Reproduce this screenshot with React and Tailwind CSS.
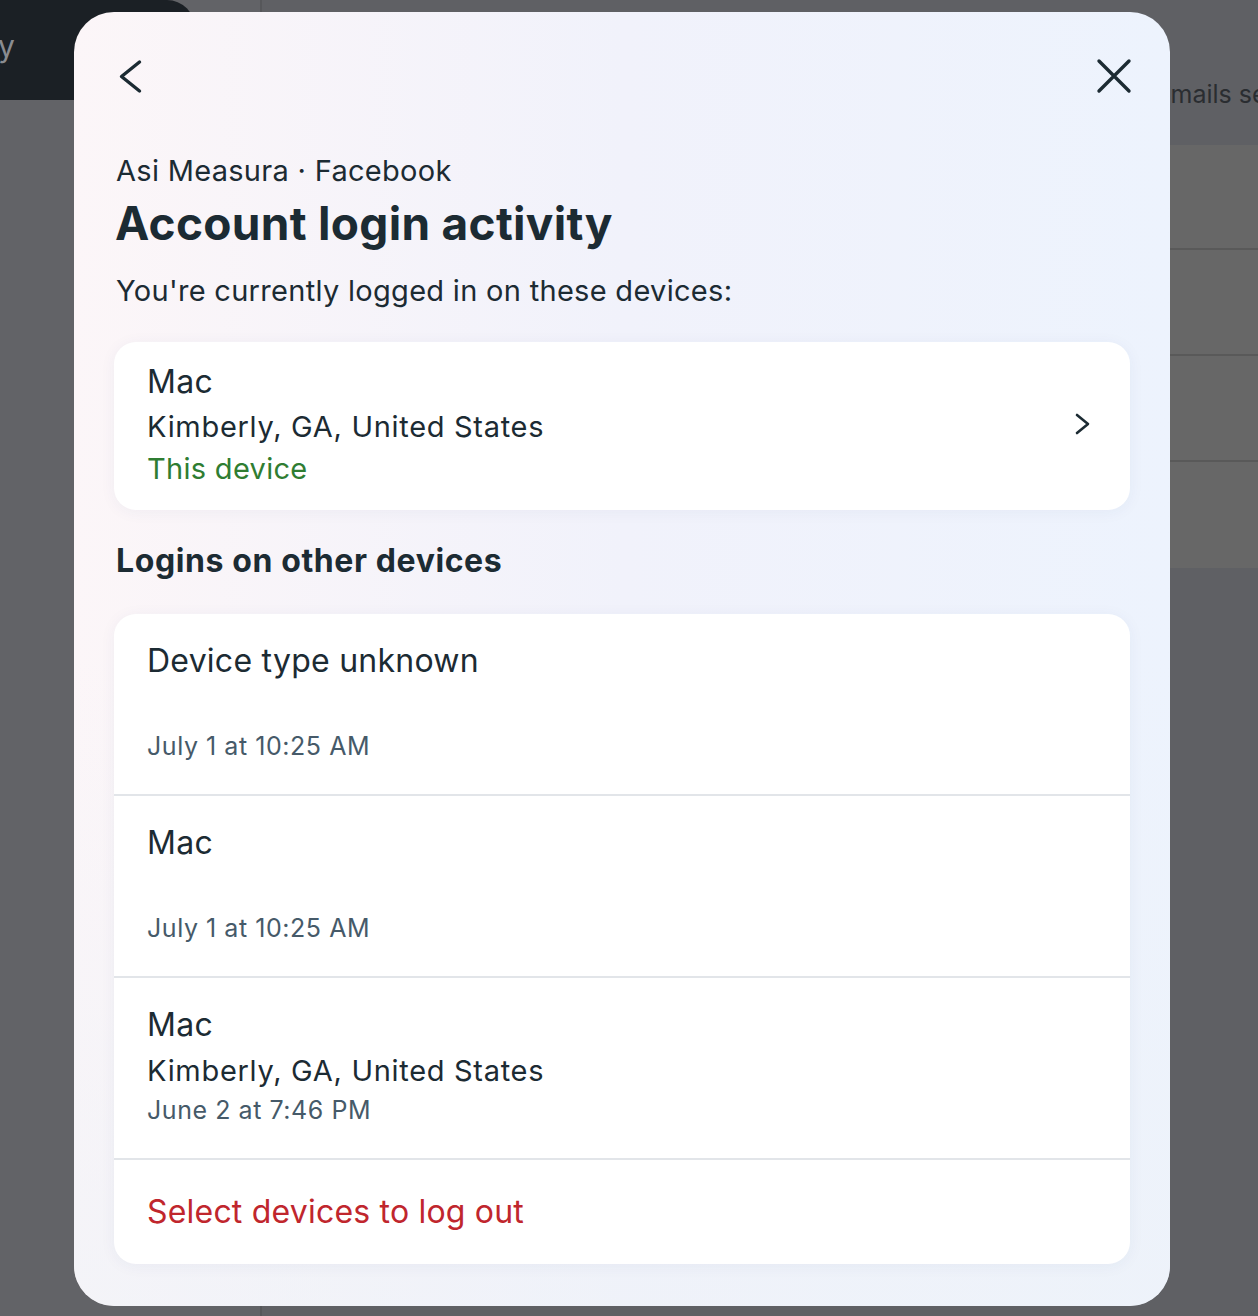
import React from "react";

function BackIcon() {
  return (
    <svg width="36" height="36" viewBox="0 0 36 36" fill="none" className="overflow-visible">
      <path d="M25.5 4 L7.5 18.5 L25.5 33" stroke="#1c2b33" strokeWidth="3.4" strokeLinecap="round" strokeLinejoin="round" />
    </svg>
  );
}

function CloseIcon() {
  return (
    <svg width="36" height="36" viewBox="0 0 36 36" fill="none" className="overflow-visible">
      <path d="M5 3 L35 33 M35 3 L5 33" stroke="#1c2b33" strokeWidth="3.4" strokeLinecap="round" />
    </svg>
  );
}

function ChevronRight() {
  return (
    <svg width="24" height="24" viewBox="0 0 24 24" fill="none">
      <path d="M7 3 L18 12 L7 21" stroke="#1c2b33" strokeWidth="2.6" strokeLinecap="round" strokeLinejoin="round" />
    </svg>
  );
}

function DeviceRow({ name, location, date, last }) {
  return (
    <div className={"pl-[33px] pr-[33px] pt-[24px] pb-[32px] " + (last ? "" : "border-b-2 border-[#e2e5e9]")}>
      <div className="text-[32px] leading-[46px] tracking-[0.25px] text-[#1c2b33]">{name}</div>
      <div className="text-[29px] leading-[46px] tracking-[0.7px] text-[#1c2b33] h-[46px]">{location}</div>
      <div className="text-[25px] leading-[32px] tracking-[0.55px] text-[#465a69]">{date}</div>
    </div>
  );
}

export default function App() {
  return (
    <div
      className="relative w-full h-[1316px] overflow-hidden bg-[#606165]"
      style={{ fontFamily: "Inter, 'Noto Sans', 'Liberation Sans', sans-serif" }}
    >
      {/* dimmed background page */}
      <div className="flex h-full">
        <div className="w-[262px] shrink-0 border-r-2 border-[#56575a] bg-[#626367] flex flex-col">
          <div className="h-[100px] w-[195px] bg-[#1b2025] rounded-tr-[28px] flex items-center">
            <span className="text-[30px] text-[#8a8c90] -ml-[2px] -mt-[8px]">y</span>
          </div>
        </div>
        <div className="flex-1 flex flex-col bg-[#5f6064]">
          <div className="h-[145px] flex items-start pl-[894px] pt-[76px]">
            <span className="text-[25px] leading-[36px] text-[#2a2d31] whitespace-nowrap">emails sent</span>
          </div>
          <div className="bg-[#676767]">
            <div className="h-[105px] border-b-2 border-[#595959]" />
            <div className="h-[106px] border-b-2 border-[#595959]" />
            <div className="h-[106px] border-b-2 border-[#595959]" />
            <div className="h-[106px]" />
          </div>
          <div className="flex-1 bg-[#5f6064]" />
        </div>
      </div>

      {/* modal */}
      <div className="absolute left-[74px] top-[12px] w-[1096px] h-[1294px] rounded-[40px] overflow-hidden bg-gradient-to-r from-[#fcf6f8] via-[#f1f2fb] to-[#edf3fd]">
        <div className="absolute inset-0 bg-gradient-to-b from-transparent via-transparent to-[#eef2f8] opacity-60" />
        <div className="relative px-[40px] pt-[28px] pb-[42px]">
          <div className="h-[72px] flex items-center justify-between">
            <BackIcon />
            <CloseIcon />
          </div>

          <div className="mt-[41px] pl-[2px] text-[29px] leading-[36px] tracking-[0.3px] text-[#1c2b33]">Asi Measura · Facebook</div>
          <h1 className="mt-[8px] pl-[1px] text-[46px] leading-[52px] font-bold text-[#1c2b33] tracking-[0.3px]">
            Account login activity
          </h1>
          <p className="mt-[24px] pl-[2px] text-[29px] leading-[36px] tracking-[0.3px] text-[#1c2b33]">
            You're currently logged in on these devices:
          </p>

          <div className="mt-[33px] bg-white rounded-[22px] shadow-[0_2px_16px_rgba(30,60,120,0.05)] pl-[33px] pr-[36px] pt-[16px] pb-[21px] flex items-center justify-between">
            <div>
              <div className="text-[32px] leading-[47px] tracking-[0.25px] text-[#1c2b33]">Mac</div>
              <div className="text-[29px] leading-[43px] tracking-[0.7px] text-[#1c2b33]">Kimberly, GA, United States</div>
              <div className="text-[29px] leading-[41px] tracking-[0.3px] text-[#2f7d32]">This device</div>
            </div>
            <ChevronRight />
          </div>

          <h2 className="mt-[31px] pl-[2px] text-[32px] leading-[40px] font-bold tracking-[0.6px] text-[#1c2b33]">
            Logins on other devices
          </h2>

          <div className="mt-[33px] bg-white rounded-[22px] shadow-[0_2px_16px_rgba(30,60,120,0.05)] overflow-hidden">
            <DeviceRow name="Device type unknown" location="" date="July 1 at 10:25 AM" />
            <DeviceRow name="Mac" location="" date="July 1 at 10:25 AM" />
            <DeviceRow name="Mac" location="Kimberly, GA, United States" date="June 2 at 7:46 PM" />
            <div className="pl-[33px] pt-[30px] pb-[30px] text-[32px] leading-[44px] tracking-[0.2px] text-[#c0262d]">
              Select devices to log out
            </div>
          </div>
        </div>
      </div>
    </div>
  );
}
